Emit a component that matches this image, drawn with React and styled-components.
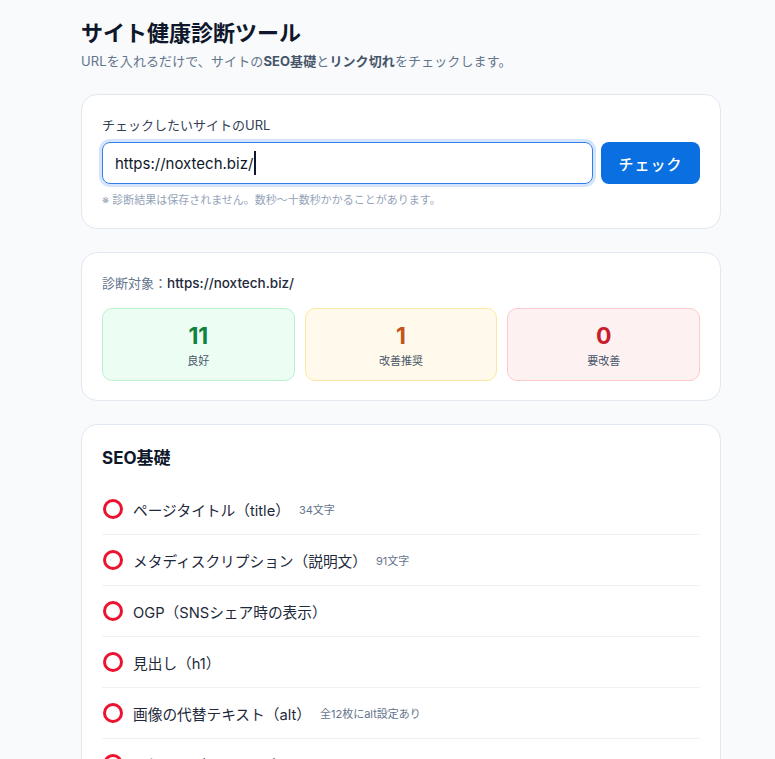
import React from 'react';
import styled, { createGlobalStyle } from 'styled-components';

const GlobalStyle = createGlobalStyle`
  html, body {
    margin: 0;
    padding: 0;
    background: #f8fafc;
  }
  body {
    font-family: Inter, "Noto Sans CJK JP", "Noto Sans", sans-serif;
    color: #1e293b;
  }
`;

const stats = [
  { id: 'good', value: 11, label: '良好' },
  { id: 'warn', value: 1, label: '改善推奨' },
  { id: 'bad', value: 0, label: '要改善' },
];

const seoItems = [
  { id: 'title', label: 'ページタイトル（title）', detail: '34文字' },
  { id: 'desc', label: 'メタディスクリプション（説明文）', detail: '91文字' },
  { id: 'ogp', label: 'OGP（SNSシェア時の表示）' },
  { id: 'h1', label: '見出し（h1）' },
  { id: 'alt', label: '画像の代替テキスト（alt）', detail: '全12枚にalt設定あり' },
  { id: 'canonical', label: '正規URL（canonical）' },
];

const App = () => {
  return (
    <>
      <GlobalStyle />
      <Page>
        <Header>
          <Title>サイト健康診断ツール</Title>
          <Lead>
            URLを入れるだけで、サイトの<strong>SEO基礎</strong>と<strong>リンク切れ</strong>をチェックします。
          </Lead>
        </Header>

        <Card>
          <FieldLabel>チェックしたいサイトのURL</FieldLabel>
          <FormRow>
            <UrlField>
              https://noxtech.biz/
              <Caret />
            </UrlField>
            <CheckButton type="button">チェック</CheckButton>
          </FormRow>
          <Note>※ 診断結果は保存されません。数秒〜十数秒かかることがあります。</Note>
        </Card>

        <Card $bottom={19}>
          <Target>
            診断対象：<TargetUrl>https://noxtech.biz/</TargetUrl>
          </Target>
          <StatGrid>
            {stats.map(stat => (
              <StatBox key={stat.id} $tone={stat.id}>
                <StatValue $tone={stat.id}>{stat.value}</StatValue>
                <StatLabel>{stat.label}</StatLabel>
              </StatBox>
            ))}
          </StatGrid>
        </Card>

        <Card>
          <SectionTitle>SEO基礎</SectionTitle>
          <CheckList>
            {seoItems.map(item => (
              <CheckRow key={item.id}>
                <Ring />
                <CheckLabel>{item.label}</CheckLabel>
                {item.detail && <CheckDetail>{item.detail}</CheckDetail>}
              </CheckRow>
            ))}
          </CheckList>
        </Card>
      </Page>
    </>
  );
};

const tones = {
  good: { bg: '#ecfdf3', border: '#bbf0cf', text: '#12803f' },
  warn: { bg: '#fffaeb', border: '#fde7a0', text: '#c2541c' },
  bad: { bg: '#fef1f2', border: '#fccacd', text: '#c81e2c' },
};

const Page = styled.div`
  width: 640px;
  margin-left: 81px;
  padding-top: 18px;
  display: flex;
  flex-direction: column;
  gap: 23px;
`;

const Header = styled.header`
  display: flex;
  flex-direction: column;
  gap: 2px;
`;

const Title = styled.h1`
  margin: 0;
  font-size: 22px;
  line-height: 31px;
  font-weight: 700;
  color: #0f172a;
`;

const Lead = styled.p`
  margin: 0;
  font-size: 13px;
  line-height: 20px;
  letter-spacing: 0.1px;
  color: #64748b;

  strong {
    color: #475569;
    font-weight: 700;
  }
`;

const Card = styled.section`
  background: #ffffff;
  border: 1px solid #e2e8f0;
  border-radius: 16px;
  padding: 20px 20px ${props => props.$bottom ?? 20}px;
`;

const FieldLabel = styled.div`
  font-size: 13px;
  line-height: 20px;
  color: #334155;
  margin-bottom: 7px;
`;

const FormRow = styled.div`
  display: flex;
  gap: 8px;
`;

const UrlField = styled.div`
  flex: 1;
  box-sizing: border-box;
  height: 42px;
  display: flex;
  align-items: center;
  padding: 0 12px;
  border: 1.5px solid #2f7fe6;
  border-radius: 8px;
  box-shadow: 0 0 0 3px rgba(59, 130, 246, 0.22);
  font-size: 15px;
  color: #0f172a;
`;

const Caret = styled.span`
  display: inline-block;
  width: 1.5px;
  height: 24px;
  margin-left: 1px;
  background: #0f172a;
`;

const CheckButton = styled.button`
  width: 99px;
  height: 42px;
  border: none;
  border-radius: 8px;
  background: #0a6fe0;
  color: #ffffff;
  font-family: inherit;
  font-size: 15px;
  font-weight: 500;
  letter-spacing: 1px;
  cursor: pointer;
`;

const Note = styled.div`
  margin-top: 8px;
  font-size: 11px;
  line-height: 16px;
  color: #94a3b8;
`;

const Target = styled.div`
  font-size: 13px;
  line-height: 20px;
  color: #64748b;
`;

const TargetUrl = styled.span`
  color: #1e293b;
  font-weight: 500;
  font-size: 13.5px;
`;

const StatGrid = styled.div`
  margin-top: 15px;
  display: grid;
  grid-template-columns: repeat(3, 1fr);
  gap: 10px;
`;

const StatBox = styled.div`
  background: ${props => tones[props.$tone].bg};
  border: 1px solid ${props => tones[props.$tone].border};
  border-radius: 10px;
  padding: 12px 0 11px;
  display: flex;
  flex-direction: column;
  align-items: center;
  gap: 2px;
`;

const StatValue = styled.div`
  font-size: 23px;
  line-height: 30px;
  font-weight: 700;
  color: ${props => tones[props.$tone].text};
`;

const StatLabel = styled.div`
  font-size: 11px;
  line-height: 16px;
  color: #475569;
`;

const SectionTitle = styled.h2`
  margin: 0;
  font-size: 17px;
  line-height: 26px;
  font-weight: 700;
  color: #0f172a;
`;

const CheckList = styled.ul`
  list-style: none;
  margin: 13px 0 0;
  padding: 0;
`;

const CheckRow = styled.li`
  display: flex;
  align-items: center;
  height: 50px;
  border-bottom: 1px solid #eef2f6;
`;

const Ring = styled.span`
  box-sizing: border-box;
  flex: none;
  width: 20px;
  height: 20px;
  margin-left: 1px;
  margin-right: 10px;
  border: 3.5px solid #ec1330;
  border-radius: 50%;
`;

const CheckLabel = styled.span`
  font-size: 14.7px;
  color: #1e293b;
`;

const CheckDetail = styled.span`
  margin-left: 9px;
  font-size: 11px;
  color: #64748b;
`;

export default App;
